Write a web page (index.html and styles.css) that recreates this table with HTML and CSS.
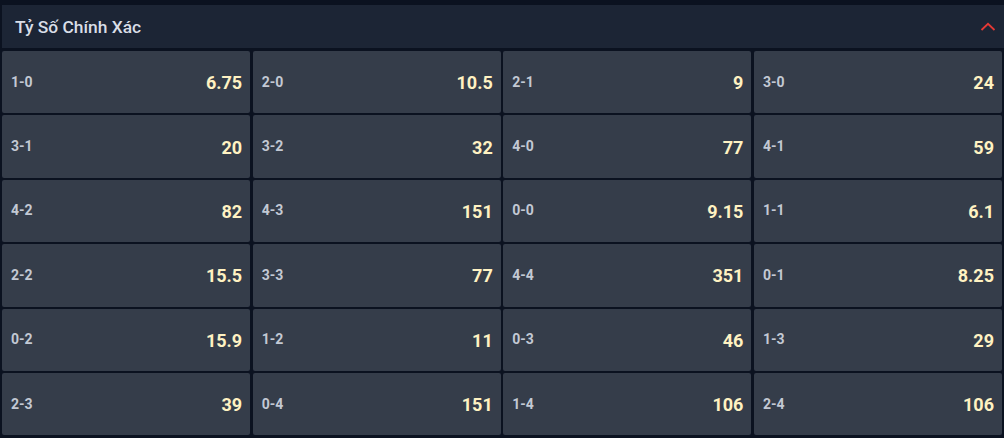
FILE: index.html
```html
<!DOCTYPE html>
<html lang="vi">
<head>
<meta charset="utf-8">
<title>Tỷ Số Chính Xác</title>
<link rel="stylesheet" href="styles.css">
</head>
<body>
<div class="market">
  <div class="market-header">
    <span class="market-title">Tỷ Số Chính Xác</span>
    <svg class="chevron" width="16" height="10" viewBox="0 0 16 10"><path d="M1.5 8 L8 1.8 L14.5 8" fill="none" stroke="#e53935" stroke-width="1.8"/></svg>
  </div>
  <div class="grid">
    <div class="cell"><span class="label">1-0</span><span class="odds">6.75</span></div>
    <div class="cell"><span class="label">2-0</span><span class="odds">10.5</span></div>
    <div class="cell"><span class="label">2-1</span><span class="odds">9</span></div>
    <div class="cell"><span class="label">3-0</span><span class="odds">24</span></div>
    <div class="cell"><span class="label">3-1</span><span class="odds">20</span></div>
    <div class="cell"><span class="label">3-2</span><span class="odds">32</span></div>
    <div class="cell"><span class="label">4-0</span><span class="odds">77</span></div>
    <div class="cell"><span class="label">4-1</span><span class="odds">59</span></div>
    <div class="cell"><span class="label">4-2</span><span class="odds">82</span></div>
    <div class="cell"><span class="label">4-3</span><span class="odds">151</span></div>
    <div class="cell"><span class="label">0-0</span><span class="odds">9.15</span></div>
    <div class="cell"><span class="label">1-1</span><span class="odds">6.1</span></div>
    <div class="cell"><span class="label">2-2</span><span class="odds">15.5</span></div>
    <div class="cell"><span class="label">3-3</span><span class="odds">77</span></div>
    <div class="cell"><span class="label">4-4</span><span class="odds">351</span></div>
    <div class="cell"><span class="label">0-1</span><span class="odds">8.25</span></div>
    <div class="cell"><span class="label">0-2</span><span class="odds">15.9</span></div>
    <div class="cell"><span class="label">1-2</span><span class="odds">11</span></div>
    <div class="cell"><span class="label">0-3</span><span class="odds">46</span></div>
    <div class="cell"><span class="label">1-3</span><span class="odds">29</span></div>
    <div class="cell"><span class="label">2-3</span><span class="odds">39</span></div>
    <div class="cell"><span class="label">0-4</span><span class="odds">151</span></div>
    <div class="cell"><span class="label">1-4</span><span class="odds">106</span></div>
    <div class="cell"><span class="label">2-4</span><span class="odds">106</span></div>
  </div>
</div>
</body>
</html>
```
FILE: styles.css
```css
html, body {
  margin: 0;
  padding: 0;
  background: #0b1220;
  font-family: Roboto, "Liberation Sans", Arial, sans-serif;
}
.market {
  padding: 5px 0 0 2px;
  width: 1002px;
}
.market-header {
  height: 43px;
  background: #1c2535;
  display: flex;
  align-items: center;
  justify-content: space-between;
  padding: 0 8px 0 13px;
}
.market-title {
  color: #d9dee7;
  font-size: 17.4px;
  font-weight: 500;
}
.chevron {
  display: block;
  margin-top: 0;
}
.grid {
  margin-top: 3px;
  display: grid;
  grid-template-columns: repeat(4, 1fr);
  grid-auto-rows: 62.4px;
  gap: 2px 2.5px;
  width: 1000px;
}
.cell {
  background: #353d4a;
  border-radius: 2px;
  display: flex;
  align-items: center;
  justify-content: space-between;
  padding: 0 8px 0 9px;
}
.label {
  color: #c3c9d4;
  font-size: 14px;
  font-weight: 700;
  margin-top: -1px;
}
.odds {
  color: #fff2c2;
  font-size: 18px;
  font-weight: 700;
  margin-top: 1px;
}
```
